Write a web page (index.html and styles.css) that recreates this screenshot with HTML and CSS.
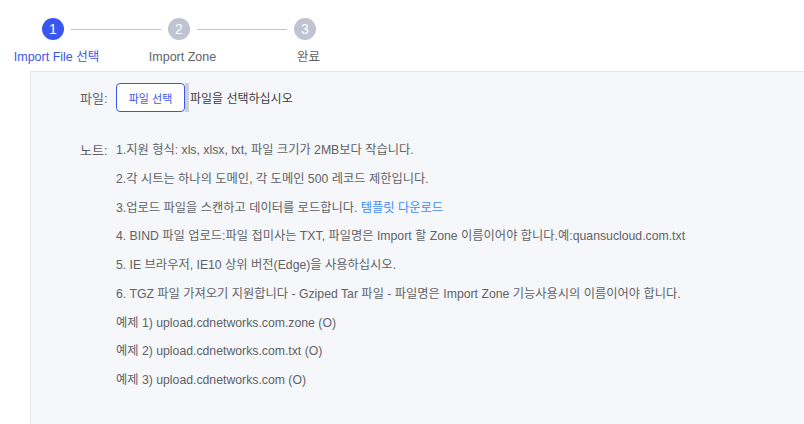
FILE: index.html
```html
<!DOCTYPE html>
<html lang="ko">
<head>
<meta charset="utf-8">
<title>Import</title>
<link rel="stylesheet" href="styles.css">
</head>
<body>
<div class="steps">
  <div class="step active">
    <div class="circle">1</div>
    <div class="label">Import File 선택</div>
  </div>
  <div class="line"></div>
  <div class="step">
    <div class="circle">2</div>
    <div class="label">Import Zone</div>
  </div>
  <div class="line"></div>
  <div class="step">
    <div class="circle">3</div>
    <div class="label">완료</div>
  </div>
</div>
<div class="panel">
  <div class="row file-row">
    <div class="key">파일:</div>
    <button class="pick">파일 선택</button>
    <span class="bar"></span>
    <span class="hint">파일을 선택하십시오</span>
  </div>
  <div class="row notes-row">
    <div class="key">노트:</div>
    <div class="notes">
      <p>1.지원 형식: xls, xlsx, txt, 파일 크기가 2MB보다 작습니다.</p>
      <p>2.각 시트는 하나의 도메인, 각 도메인 500 레코드 제한입니다.</p>
      <p>3.업로드 파일을 스캔하고 데이터를 로드합니다. <a href="#">템플릿 다운로드</a></p>
      <p>4. BIND 파일 업로드:파일 접미사는 TXT, 파일명은 Import 할 Zone 이름이어야 합니다.예:quansucloud.com.txt</p>
      <p>5. IE 브라우저, IE10 상위 버전(Edge)을 사용하십시오.</p>
      <p>6. TGZ 파일 가져오기 지원합니다 - Gziped Tar 파일 - 파일명은 Import Zone 기능사용시의 이름이어야 합니다.</p>
      <p>예제 1) upload.cdnetworks.com.zone (O)</p>
      <p>예제 2) upload.cdnetworks.com.txt (O)</p>
      <p>예제 3) upload.cdnetworks.com (O)</p>
    </div>
  </div>
</div>
</body>
</html>
```
FILE: styles.css
```css
html, body {
  margin: 0;
  padding: 0;
  background: #ffffff;
  font-family: "Liberation Sans", "Noto Sans CJK KR", sans-serif;
  color: #606266;
  height: 100%;
  overflow: hidden;
}

.steps {
  display: flex;
  align-items: flex-start;
  padding: 18px 0 0 42px;
  height: 71px;
  box-sizing: border-box;
}

.step {
  width: 22px;
  display: flex;
  flex-direction: column;
  align-items: center;
}

.circle {
  width: 22px;
  height: 22px;
  border-radius: 50%;
  background: #c0c4d2;
  color: #ffffff;
  font-size: 14px;
  line-height: 22px;
  text-align: center;
}

.step.active .circle {
  background: #3a56f2;
}

.label {
  white-space: nowrap;
  font-size: 12.5px;
  line-height: 18px;
  margin-top: 8px;
  padding-left: 7px;
  color: #606266;
}

.step.active .label {
  color: #3a56f2;
}

.line {
  width: 90px;
  height: 1px;
  margin: 11px 7px 0;
  background: #c0c4d2;
}

.panel {
  margin-left: 30px;
  border-top: 1px solid #e4e7ed;
  border-left: 1px solid #e4e7ed;
  background: #f5f7fa;
  height: 353px;
  padding: 11px 0 0 49px;
  box-sizing: border-box;
}

.row {
  display: flex;
  align-items: center;
}

.key {
  width: 36px;
  font-size: 13px;
  color: #606266;
}

.pick {
  width: 69px;
  height: 29px;
  box-sizing: border-box;
  border: 1px solid #3a56f2;
  border-radius: 4px;
  background: #ffffff;
  color: #3a56f2;
  font-family: inherit;
  font-size: 11px;
  padding: 0;
}

.bar {
  width: 4px;
  height: 29px;
  background: #cfd0d3;
}

.hint {
  font-size: 12px;
  color: #3a3b3e;
  margin-left: 1px;
}

.notes-row {
  align-items: flex-start;
  margin-top: 24px;
}

.notes-row .key {
  line-height: 29px;
}

.notes p {
  margin: 0;
  font-size: 12.25px;
  line-height: 28.75px;
  color: #606266;
  white-space: nowrap;
}

.notes a {
  color: #3d8af7;
  text-decoration: none;
}
```
